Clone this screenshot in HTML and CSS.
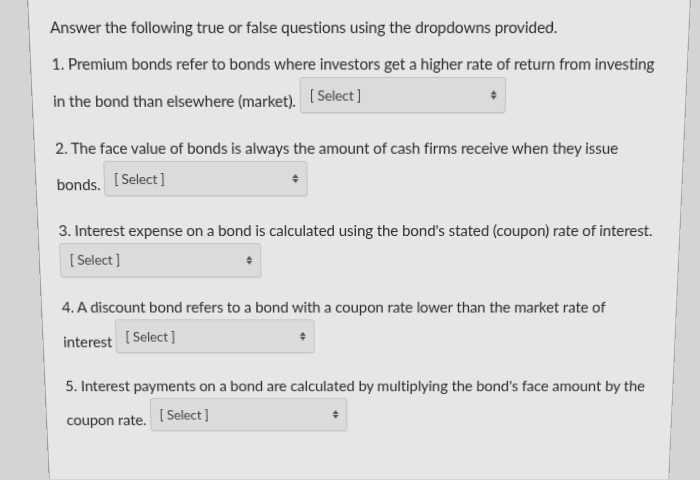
FILE: index.html
```html
<!DOCTYPE html>
<html>
<head>
<meta charset="utf-8">
<link rel="stylesheet" href="styles.css">
</head>
<body>
<div class="panel">
  <div class="content">
    <p class="intro">Answer the following true or false questions using the dropdowns provided.</p>
    <p class="q">1. Premium bonds refer to bonds where investors get a higher rate of return from investing<br>in the bond than elsewhere (market). <span class="sel"><span class="label">[ Select ]</span><span class="arrows"><span class="up"></span><span class="down"></span></span></span></p>
    <p class="q">2. The face value of bonds is always the amount of cash firms receive when they issue<br>bonds. <span class="sel"><span class="label">[ Select ]</span><span class="arrows"><span class="up"></span><span class="down"></span></span></span></p>
    <p class="q q3">3. Interest expense on a bond is calculated using the bond's stated (coupon) rate of interest.<br><span class="sel"><span class="label">[ Select ]</span><span class="arrows"><span class="up"></span><span class="down"></span></span></span></p>
    <p class="q">4. A discount bond refers to a bond with a coupon rate lower than the market rate of<br>interest <span class="sel"><span class="label">[ Select ]</span><span class="arrows"><span class="up"></span><span class="down"></span></span></span></p>
    <p class="q">5. Interest payments on a bond are calculated by multiplying the bond's face amount by the<br>coupon rate. <span class="sel"><span class="label">[ Select ]</span><span class="arrows"><span class="up"></span><span class="down"></span></span></span></p>
  </div>
</div>
</body>
</html>
```
FILE: styles.css
```css
html, body {
  margin: 0;
  padding: 0;
  background: #d4d4d2;
  width: 700px;
  height: 480px;
  overflow: hidden;
}
.panel {
  margin-top: -10px;
  margin-left: 38px;
  width: 642px;
  height: 500px;
  box-sizing: border-box;
  background: #e6e6e4;
  border-left: 1px solid #9f9f9d;
  border-right: 1px solid #a9a9a7;
  transform: perspective(1000px) rotateX(-8deg);
  transform-origin: 50% 50%;
}
.content {
  padding: 24px 10px 0 20px;
  font-family: Lato, "Open Sans", sans-serif;
  font-size: 15.1px;
  color: #2e2e2e;
  letter-spacing: -0.1px;
}
.intro {
  margin: 0;
  line-height: 35px;
  white-space: nowrap;
}
.q {
  margin: 0 0 11px 0;
  line-height: 35px;
  white-space: nowrap;
}
.q.q3 {
  margin-bottom: 8px;
}
.sel {
  display: inline-flex;
  align-items: center;
  justify-content: space-between;
  box-sizing: border-box;
  width: 202px;
  height: 35px;
  vertical-align: 6px;
  margin-top: -5px;
  margin-bottom: 3px;
  background: #dbdbd9;
  border: 1px solid #c4c4c2;
  border-radius: 3px;
  box-shadow: 0 1px 1px rgba(0,0,0,0.08);
  padding: 0 8px 0 9px;
  line-height: 1;
}
.label {
  font-size: 13.5px;
  color: #444;
  padding-top: 2px;
}
.arrows {
  display: flex;
  flex-direction: column;
  justify-content: center;
  gap: 1px;
}
.up, .down {
  width: 0;
  height: 0;
  border-left: 3px solid transparent;
  border-right: 3px solid transparent;
}
.up { border-bottom: 4px solid #555; }
.down { border-top: 4px solid #555; }
```
